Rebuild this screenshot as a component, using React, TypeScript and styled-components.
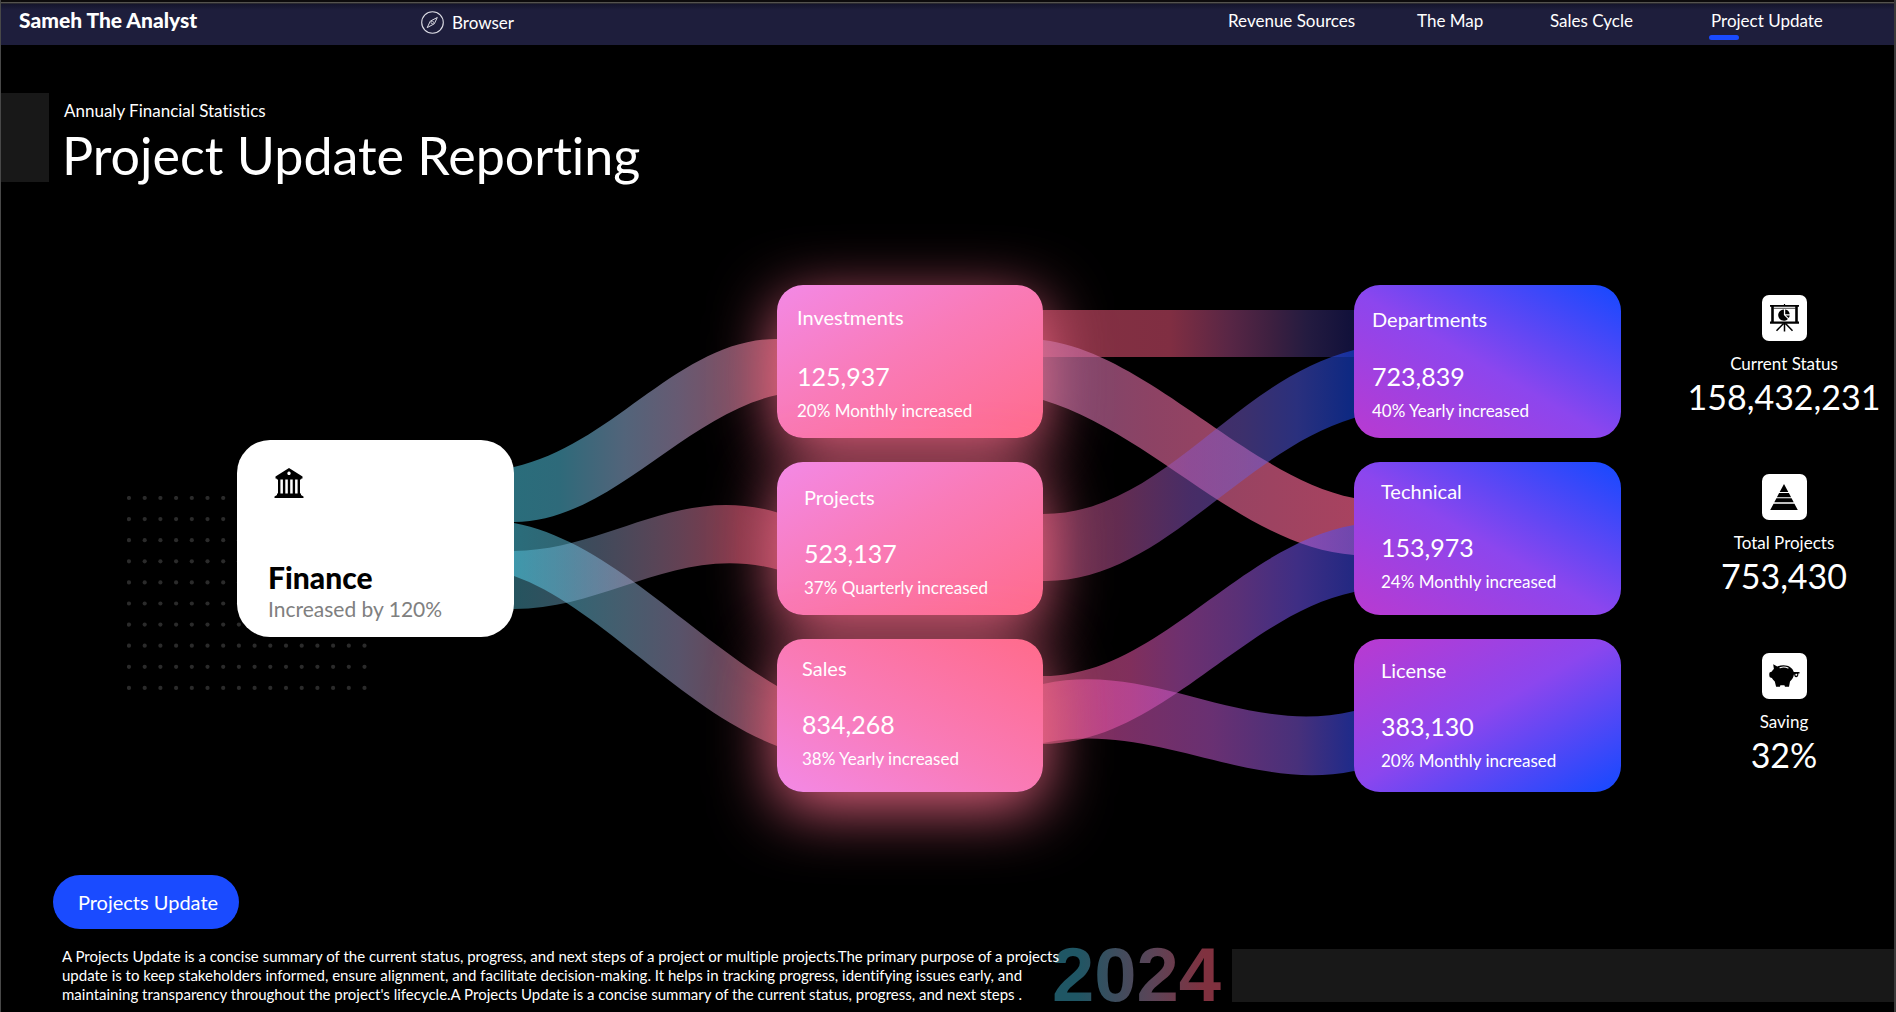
import React from "react";
import styled, { createGlobalStyle } from "styled-components";

const GlobalStyle = createGlobalStyle`
  * { box-sizing: border-box; }
  body {
    margin: 0;
    background: #000;
    color: #fff;
    font-family: Lato, "Open Sans", sans-serif;
    font-variant-ligatures: none;
  }
  h1, h2, p { margin: 0; font-weight: 400; }
  a { color: inherit; text-decoration: none; }
`;

const Frame = styled.div`
  min-height: 100vh;
  display: flex;
  flex-direction: column;
  overflow: hidden;
  border-left: 1px solid #484848;
  border-right: 2px solid #3a3a3a;
`;

const TopEdge = styled.div`
  height: 4px;
  background: linear-gradient(#0d0b0c 0 2px, #55534f 2px 3px, #2a2930 3px);
`;

const Header = styled.header`
  display: grid;
  grid-template-columns: 402px 1fr auto;
  height: 41px;
  padding-left: 18px;
  background: linear-gradient(#15152c, #1e1e3c 6px);
`;

const Brand = styled.a`
  font-size: 21px;
  line-height: 32px;
  font-weight: 900;
`;

const BrowserLink = styled.a`
  display: flex;
  align-items: center;
  justify-self: start;
  gap: 8px;
  height: 37px;
  font-size: 17px;
`;

const Nav = styled.nav`
  display: grid;
  grid-template-columns: 189px 133px 161px 183px;
`;

const NavLink = styled.a<{ $active?: boolean }>`
  position: relative;
  justify-self: start;
  font-size: 17px;
  line-height: 34px;
  &::after {
    content: "";
    display: ${(p) => (p.$active ? "block" : "none")};
    position: absolute;
    left: -2px;
    top: 31px;
    width: 30px;
    height: 5px;
    border-radius: 3px;
    background: #1a4bff;
  }
`;

const Hero = styled.section`
  display: flex;
  gap: 13px;
  padding-top: 48px;
`;

const HeroBlock = styled.div`
  width: 48px;
  height: 89px;
  background: #181818;
`;

const HeroText = styled.div`
  padding-top: 6px;
`;

const Eyebrow = styled.p`
  padding-left: 2px;
  font-size: 17px;
  line-height: 24px;
`;

const Title = styled.h1`
  height: 59px;
  font-size: 52px;
  line-height: 64px;
`;

const Board = styled.main`
  display: grid;
  grid-template-columns: 236fr 277px 263fr 266px 311fr 267px 69fr 188px 16fr;
  margin-top: 103px;
`;

const FinanceSlot = styled.div`
  grid-column: 2;
  align-self: center;
  position: relative;
  z-index: 1;
`;

const Dots = styled.svg`
  position: absolute;
  left: -110px;
  top: 56px;
`;

const FinanceCard = styled.article`
  position: relative;
  height: 197px;
  padding: 28px 31px;
  border-radius: 33px;
  background: #fff;
  color: #000;
`;

const FinanceIcon = styled.svg`
  display: block;
  margin-left: 6px;
`;

const FinanceName = styled.h2`
  margin-top: 62px;
  font-size: 30px;
  line-height: 34px;
  font-weight: 900;
`;

const FinanceNote = styled.p`
  font-size: 21px;
  line-height: 30px;
  color: #808080;
`;

const Flow = styled.svg`
  display: block;
  width: 100%;
  height: 507px;
  overflow: visible;
`;

const CardColumn = styled.div`
  display: flex;
  flex-direction: column;
  gap: 24px;
  position: relative;
  z-index: 1;
`;

const fills = {
  pinkDown: "linear-gradient(to bottom right, #f389e6, #f97bb8 45%, #ff6b8b)",
  pinkUp: "linear-gradient(to top right, #f389e6, #f97bb8 45%, #ff6b8b)",
  violetUp: "linear-gradient(to top right, #b93ad0, #8c46ee 48%, #1449ff)",
  violetDown: "linear-gradient(to bottom right, #b93ad0, #8c46ee 48%, #1449ff)",
};

interface CardStyle {
  $fill: keyof typeof fills;
  $top: number;
  $left: number;
  $glow: boolean;
}

const Card = styled.article<CardStyle>`
  height: 153px;
  padding: ${(p) => p.$top}px 12px 0 ${(p) => p.$left}px;
  border-radius: 26px;
  background: ${(p) => fills[p.$fill]};
  box-shadow: ${(p) => (p.$glow ? "0 16px 64px rgba(255, 110, 142, 0.9)" : "none")};
`;

const CardTitle = styled.h2`
  font-size: 20px;
  line-height: 24px;
`;

const CardValue = styled.p<{ $gap: number }>`
  margin-top: ${(p) => p.$gap}px;
  font-size: 25px;
  line-height: 32px;
`;

const CardNote = styled.p`
  margin-top: 7px;
  font-size: 17px;
  line-height: 24px;
`;

const Stats = styled.aside`
  grid-column: 8;
  display: flex;
  flex-direction: column;
  gap: 57px;
  padding-top: 10px;
`;

const Stat = styled.div`
  display: flex;
  flex-direction: column;
  align-items: center;
`;

const StatIcon = styled.div`
  display: grid;
  place-items: center;
  width: 45px;
  height: 46px;
  border-radius: 7px;
  background: #fff;
`;

const StatLabel = styled.p`
  margin-top: 11px;
  font-size: 17px;
  line-height: 24px;
`;

const StatValue = styled.p`
  font-size: 34px;
  line-height: 41px;
`;

const UpdateButton = styled.button`
  align-self: flex-start;
  margin: 83px 0 0 52px;
  width: 186px;
  height: 54px;
  padding: 0 0 0 4px;
  border: 0;
  border-radius: 27px;
  background: #1a4bff;
  color: #fff;
  font-family: inherit;
  font-size: 20px;
`;

const Footer = styled.footer`
  display: flex;
  align-items: flex-start;
  margin-top: 18px;
  padding-left: 61px;
`;

const Summary = styled.p`
  position: relative;
  z-index: 1;
  flex: 0 0 1020px;
  white-space: nowrap;
  font-size: 15px;
  line-height: 19px;
`;

const Line = styled.span`
  display: block;
`;

const Year = styled.div`
  flex: none;
  margin: -7px 0 0 -30px;
  font-family: "Liberation Sans", Arial, sans-serif;
  font-size: 76px;
  line-height: 70px;
  font-weight: 700;
  color: transparent;
  background: linear-gradient(90deg, #1f5664 15%, #5c4457 60%, #80313f 90%);
  background-clip: text;
  -webkit-background-clip: text;
`;

const FooterBar = styled.div`
  flex: 1;
  height: 53px;
  margin: 2px 0 0 11px;
  background: #181818;
`;

type Stop = [offset: number, color: string];

function Gradient({ id, stops, width }: { id: string; stops: Stop[]; width: number }) {
  return (
    <linearGradient id={id} gradientUnits="userSpaceOnUse" x1="0" y1="0" x2={width} y2="0">
      {stops.map(([x, color]) => (
        <stop key={x} offset={x / width} stopColor={color} />
      ))}
    </linearGradient>
  );
}

function FinanceFlow() {
  return (
    <Flow viewBox="0 0 263 507" preserveAspectRatio="none" aria-hidden="true">
      <defs>
        <Gradient id="toInvest" width={263} stops={[[0, "#2a6d7b"], [45, "#2e6a7a"], [110, "#52647a"], [165, "#675a72"], [215, "#7c5064"], [263, "#954a58"]]} />
        <Gradient id="toSales" width={263} stops={[[0, "#2a6d7b"], [50, "#316573"], [110, "#465d6e"], [165, "#58536a"], [200, "#644a5e"], [263, "#84414f"]]} />
        <linearGradient id="toProjects" gradientUnits="userSpaceOnUse" x1="0" y1="0" x2="265" y2="0">
          <stop offset="0" stopColor="#61ddfa" stopOpacity="0.38" />
          <stop offset="0.32" stopColor="#99b0d8" stopOpacity="0.42" />
          <stop offset="0.62" stopColor="#c583a8" stopOpacity="0.5" />
          <stop offset="0.85" stopColor="#f36583" stopOpacity="0.55" />
          <stop offset="1" stopColor="#f36583" stopOpacity="0.55" />
        </linearGradient>
      </defs>
      <path fill="url(#toInvest)" d="M-4 183 L0 182 C100 160 165 54 263 54 L268 54 V109 L263 110 C170 130 95 237 0 237 L-4 237Z" />
      <path fill="url(#toSales)" d="M-4 237 L0 238 C92 255 172 347 263 401 L268 405 V464 L263 461 C165 423 85 321 0 291 L-4 290Z" />
      <path fill="url(#toProjects)" d="M-4 266 L0 266 C95 265 165 197 265 228 V285 C165 257 95 324 0 324 L-4 324Z" />
    </Flow>
  );
}

function DepartmentFlow() {
  return (
    <Flow viewBox="0 0 311 507" preserveAspectRatio="none" aria-hidden="true">
      <defs>
        <Gradient id="invToDep" width={311} stops={[[0, "#843142"], [127, "#802e42"], [187, "#582645"], [227, "#3e2040"], [264, "#241b40"], [311, "#10103a"]]} />
        <Gradient id="invToTech" width={311} stops={[[0, "#b878ac"], [40, "#c26ba2"], [110, "#d66598"], [200, "#e96694"], [311, "#ff6591"]]} />
        <Gradient id="projToDep" width={311} stops={[[0, "#f06490"], [35, "#c85a92"], [75, "#be559a"], [147, "#8a55c4"], [200, "#745ccf"], [254, "#515cf0"], [311, "#174dfa"]]} />
        <Gradient id="salesToTech" width={311} stops={[[0, "#f06490"], [87, "#ed57aa"], [137, "#cc59cc"], [194, "#a759db"], [254, "#7455f4"], [311, "#3f4af0"]]} />
        <Gradient id="salesToLic" width={311} stops={[[0, "#f06490"], [60, "#e755b0"], [170, "#c159d3"], [254, "#8559e2"], [311, "#384eff"]]} />
      </defs>
      <rect x="-4" y="25" width="320" height="47" fill="url(#invToDep)" />
      <path fill="url(#invToTech)" fillOpacity="0.66" d="M-4 54 L0 55 C105 68 205 192 311 213 L316 214 V270 L311 270 C200 262 110 148 0 115 L-4 114Z" />
      <path fill="url(#projToDep)" fillOpacity="0.52" d="M-4 229 L0 229 C120 229 190 95 311 65 L316 64 V132 L311 133 C195 168 118 298 0 296 L-4 296Z" />
      <path fill="url(#salesToTech)" fillOpacity="0.54" d="M-4 391 L0 391 C115 391 195 260 311 240 L316 239 V306 L311 307 C200 330 118 458 0 459 L-4 459Z" />
      <path fill="url(#salesToLic)" fillOpacity="0.54" d="M-4 400 L0 399 C110 375 200 452 311 426 L316 425 V485 L311 486 C205 508 110 435 0 458 L-4 459Z" />
    </Flow>
  );
}

function DotField() {
  const rows = Array.from({ length: 10 }, (_, r) => r);
  const cols = Array.from({ length: 16 }, (_, c) => c);
  return (
    <Dots width="240" height="196" aria-hidden="true">
      {rows.map((r) => cols.map((c) => <circle key={`${r}-${c}`} cx={2 + c * 15.7} cy={2 + r * 21.1} r="2.1" fill="#2b2b2b" />))}
    </Dots>
  );
}

function BankGlyph() {
  return (
    <FinanceIcon width="30" height="30" viewBox="0 0 30 30" aria-hidden="true">
      <path fillRule="evenodd" d="M15 0 L28.500 8.500 V10.500 H27.500 L27 11.500 H3 L2.500 10.500 H1.500 V8.500Z M15 3.600 a1.700 1.700 0 1 0 .01 0Z" />
      <path d="M4 11h2.400v15H4zM8.900 11h2.400v15H8.900zM13.800 11h2.400v15h-2.400zM18.700 11h2.400v15h-2.400zM23.600 11H26v15h-2.400zM3 25.500h24v1.500l2.500 1.500V30H.5v-1.500L3 27z" />
    </FinanceIcon>
  );
}

function CompassGlyph() {
  return (
    <svg width="23" height="23" viewBox="0 0 23 23" fill="none" stroke="#dcdce4" aria-hidden="true">
      <circle cx="11.500" cy="11.500" r="10.800" strokeWidth="1.100" />
      <path d="M16.300 6.500 L13.300 12.800 L6.200 16.600 L9.300 10.100Z" strokeWidth="1" />
      <circle cx="11.300" cy="11.500" r="1.300" strokeWidth=".8" />
    </svg>
  );
}

function BoardGlyph() {
  return (
    <svg width="29" height="28" viewBox="0 0 29 28" aria-hidden="true">
      <path d="M13.900 0h1.200v1.500h-1.200zM0 1h29v1.800H0zM0 17.600h29v2.100H0zM1.200 2.500h2.600v15.500H1.200zM25.200 2.500h2.600v15.500h-2.600z" />
      <path d="M3.500 4.300h22" stroke="#000" strokeWidth=".7" />
      <path d="M13.900 5.500v5.500l4 3.900A5.600 5.600 0 1 1 13.900 5.500z" />
      <path d="M15.200 5.500a5.500 5.500 0 0 1 4.500 4.800h-4.500zM15.800 11.400h3.900a5.500 5.500 0 0 1-1.100 2.700z" />
      <path d="M14.500 19v8.500M13.500 19.500 6.500 26.800M15.500 19.500l7 7.300" stroke="#000" strokeWidth="1.500" fill="none" />
    </svg>
  );
}

function PyramidGlyph() {
  return (
    <svg width="28" height="26" viewBox="0 0 28 26" aria-hidden="true">
      <path d="M14 0 18.300 8H9.700zM9.100 9h9.800l2.200 4.200H6.900zM6.400 14.300h15.200l2.100 4H4.300zM3.600 19.800h20.800L27.800 26H.2z" />
    </svg>
  );
}

function PiggyGlyph() {
  return (
    <svg width="31" height="24" viewBox="0 0 31 24" aria-hidden="true">
      <path d="M4.200.3 8.300 2.500C10 1.600 12 1.200 14.500 1.200c5.300 0 9.300 2.800 10.300 6.900h5.700v1.300h-1.200c.3 2.200-.7 3.800-2.200 3.800-1.300 0-2-1.200-1.800-2.600h-.4c-.4 3.100-2 5.300-3.900 6.900L20 22.800h-4l-.6-1.600c-1.400.2-2.700.2-4 0l-.5 1.600H7.100l-1.300-5.400C4.500 16.400 3.500 15.200 2.900 14L.8 13.200C.1 12 .1 9.600.6 8.400l2.300-.9c.5-1.100 1.200-1.800 2-2.500z" />
      <path d="M11 3.700c2.800-1 5.700-.8 8 .4" stroke="#fff" strokeWidth="1.100" fill="none" strokeLinecap="round" />
      <circle cx="27.300" cy="10.800" r="1" fill="#fff" />
    </svg>
  );
}

interface Item {
  title: string;
  value: string;
  note: string;
  fill: keyof typeof fills;
  top: number;
  left: number;
  gap: number;
}

const streams: Item[] = [
  { title: "Investments", value: "125,937", note: "20% Monthly increased", fill: "pinkDown", top: 20, left: 20, gap: 31 },
  { title: "Projects", value: "523,137", note: "37% Quarterly increased", fill: "pinkDown", top: 23, left: 27, gap: 28 },
  { title: "Sales", value: "834,268", note: "38% Yearly increased", fill: "pinkUp", top: 17, left: 25, gap: 28 },
];

const departments: Item[] = [
  { title: "Departments", value: "723,839", note: "40% Yearly increased", fill: "violetUp", top: 22, left: 18, gap: 29 },
  { title: "Technical", value: "153,973", note: "24% Monthly increased", fill: "violetUp", top: 17, left: 27, gap: 28 },
  { title: "License", value: "383,130", note: "20% Monthly increased", fill: "violetDown", top: 19, left: 27, gap: 28 },
];

function Cards({ items, glow = false }: { items: Item[]; glow?: boolean }) {
  return (
    <CardColumn>
      {items.map((item) => (
        <Card key={item.title} $fill={item.fill} $top={item.top} $left={item.left} $glow={glow}>
          <CardTitle>{item.title}</CardTitle>
          <CardValue $gap={item.gap}>{item.value}</CardValue>
          <CardNote>{item.note}</CardNote>
        </Card>
      ))}
    </CardColumn>
  );
}

const stats = [
  { label: "Current Status", value: "158,432,231", icon: <BoardGlyph /> },
  { label: "Total Projects", value: "753,430", icon: <PyramidGlyph /> },
  { label: "Saving", value: "32%", icon: <PiggyGlyph /> },
];

const links = ["Revenue Sources", "The Map", "Sales Cycle", "Project Update"];

const summary = [
  "A Projects Update is a concise summary of the current status, progress, and next steps of a project or multiple projects.The primary purpose of a projects",
  "update is to keep stakeholders informed, ensure alignment, and facilitate decision-making. It helps in tracking progress, identifying issues early, and",
  "maintaining transparency throughout the project's lifecycle.A Projects Update is a concise summary of the current status, progress, and next steps .",
];

export default function App() {
  return (
    <Frame>
      <GlobalStyle />
      <TopEdge />
      <Header>
        <Brand href="#home">Sameh The Analyst</Brand>
        <BrowserLink href="#browser">
          <CompassGlyph />
          Browser
        </BrowserLink>
        <Nav>
          {links.map((label) => (
            <NavLink key={label} href="#section" $active={label === "Project Update"}>
              {label}
            </NavLink>
          ))}
        </Nav>
      </Header>
      <Hero>
        <HeroBlock />
        <HeroText>
          <Eyebrow>Annualy Financial Statistics</Eyebrow>
          <Title>Project Update Reporting</Title>
        </HeroText>
      </Hero>
      <Board>
        <FinanceSlot>
          <DotField />
          <FinanceCard>
            <BankGlyph />
            <FinanceName>Finance</FinanceName>
            <FinanceNote>Increased by 120%</FinanceNote>
          </FinanceCard>
        </FinanceSlot>
        <FinanceFlow />
        <Cards items={streams} glow />
        <DepartmentFlow />
        <Cards items={departments} />
        <Stats>
          {stats.map((s) => (
            <Stat key={s.label}>
              <StatIcon>{s.icon}</StatIcon>
              <StatLabel>{s.label}</StatLabel>
              <StatValue>{s.value}</StatValue>
            </Stat>
          ))}
        </Stats>
      </Board>
      <UpdateButton type="button">Projects Update</UpdateButton>
      <Footer>
        <Summary>
          {summary.map((text) => (
            <Line key={text}>{text}</Line>
          ))}
        </Summary>
        <Year>2024</Year>
        <FooterBar />
      </Footer>
    </Frame>
  );
}
